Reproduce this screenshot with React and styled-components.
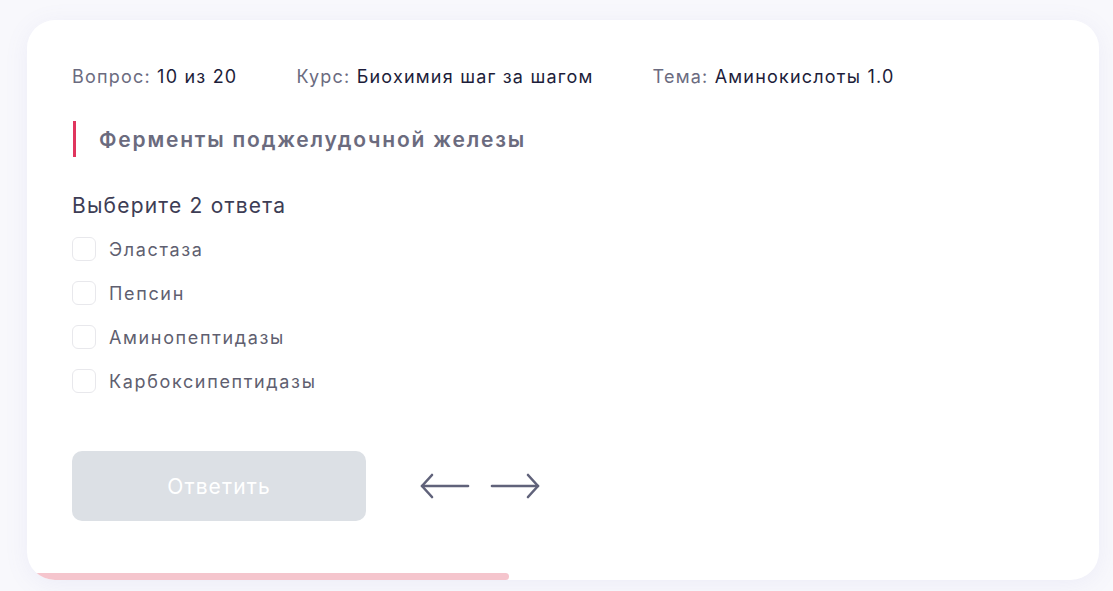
import React, { useState } from "react";
import styled, { createGlobalStyle } from "styled-components";

const GlobalStyle = createGlobalStyle`
  html, body {
    margin: 0;
    padding: 0;
    background: #f8f8fc;
    font-family: Inter, "Noto Sans", sans-serif;
  }
  * {
    box-sizing: border-box;
  }
`;

const Page = styled.div`
  padding: 20px 14px 11px 27px;
  width: 1113px;
  height: 591px;
`;

const Card = styled.div`
  position: relative;
  height: 560px;
  background: #ffffff;
  border-radius: 28px;
  overflow: hidden;
  box-shadow: 0 4px 24px rgba(120, 120, 200, 0.09);
  padding: 46px 45px 0 45px;
`;

const MetaRow = styled.div`
  display: flex;
  align-items: center;
  gap: 59px;
  font-size: 18px;
  line-height: 22px;
  letter-spacing: 1.2px;
`;

const MetaItem = styled.div`
  color: #6b6b80;
  white-space: nowrap;
  span {
    color: #1d1d3a;
  }
`;

const Heading = styled.h2`
  margin: 33px 0 0 1px;
  border-left: 3px solid #e0355e;
  padding-left: 23px;
  height: 36px;
  display: flex;
  align-items: center;
  font-size: 21px;
  font-weight: 600;
  letter-spacing: 1.8px;
  color: #6b6b7e;
`;

const Prompt = styled.div`
  margin-top: 36px;
  font-size: 21px;
  line-height: 25px;
  letter-spacing: 1.2px;
  color: #3d3d55;
`;

const Options = styled.div`
  margin-top: 19px;
  display: flex;
  flex-direction: column;
  gap: 20px;
`;

const Option = styled.label`
  display: flex;
  align-items: center;
  gap: 13px;
  height: 24px;
  font-size: 18px;
  letter-spacing: 1.65px;
  color: #5f5f70;
  cursor: pointer;
`;

const Box = styled.span`
  width: 24px;
  height: 24px;
  border: 1.5px solid #e8e8ec;
  border-radius: 6px;
  background: ${({ $checked }) => ($checked ? "#e0355e" : "#fff")};
`;

const Actions = styled.div`
  margin-top: 58px;
  display: flex;
  align-items: center;
  gap: 54px;
`;

const AnswerButton = styled.button`
  width: 294px;
  height: 70px;
  border: none;
  border-radius: 10px;
  background: #dce0e5;
  color: #ffffff;
  font-family: inherit;
  font-size: 21px;
  letter-spacing: 1.1px;
`;

const Arrows = styled.div`
  display: flex;
  gap: 20px;
  color: #60627a;
`;

const ArrowButton = styled.button`
  background: none;
  border: none;
  padding: 0;
  display: flex;
  color: inherit;
  cursor: pointer;
`;

const Progress = styled.div`
  position: absolute;
  left: 0;
  bottom: 0;
  height: 7px;
  background: #f5c5cd;
  border-radius: 0 4px 4px 0;
`;

const Arrow = ({ dir }) => (
  <svg width="50" height="26" viewBox="0 0 50 26" fill="none" stroke="currentColor" strokeWidth="2.6" strokeLinecap="round" strokeLinejoin="round">
    {dir === "left" ? (
      <>
        <path d="M2 13H48" />
        <path d="M12 2L2 13L12 24" />
      </>
    ) : (
      <>
        <path d="M2 13H48" />
        <path d="M38 2L48 13L38 24" />
      </>
    )}
  </svg>
);

const options = ["Эластаза", "Пепсин", "Аминопептидазы", "Карбоксипептидазы"];

export default function App() {
  const [checked, setChecked] = useState([]);
  const toggle = (i) =>
    setChecked((c) => (c.includes(i) ? c.filter((x) => x !== i) : [...c, i]));

  return (
    <Page>
      <GlobalStyle />
      <Card>
        <MetaRow>
          <MetaItem>
            Вопрос: <span>10 из 20</span>
          </MetaItem>
          <MetaItem>
            Курс: <span>Биохимия шаг за шагом</span>
          </MetaItem>
          <MetaItem>
            Тема: <span>Аминокислоты 1.0</span>
          </MetaItem>
        </MetaRow>
        <Heading>Ферменты поджелудочной железы</Heading>
        <Prompt>Выберите 2 ответа</Prompt>
        <Options>
          {options.map((o, i) => (
            <Option key={o} onClick={() => toggle(i)}>
              <Box $checked={checked.includes(i)} />
              {o}
            </Option>
          ))}
        </Options>
        <Actions>
          <AnswerButton disabled>Ответить</AnswerButton>
          <Arrows>
            <ArrowButton>
              <Arrow dir="left" />
            </ArrowButton>
            <ArrowButton>
              <Arrow dir="right" />
            </ArrowButton>
          </Arrows>
        </Actions>
        <Progress style={{ width: `${(10 / 20) * 100 - 5}%` }} />
      </Card>
    </Page>
  );
}
